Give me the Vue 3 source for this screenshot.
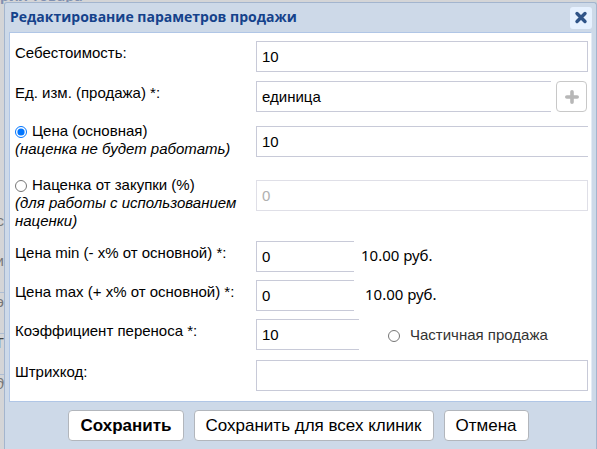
<script setup>
import { ref } from 'vue'

const cost = ref('10')
const unit = ref('единица')
const mode = ref('price')
const price = ref('10')
const markup = ref('0')
const minPct = ref('0')
const maxPct = ref('0')
const ratio = ref('10')
const partial = ref(false)
const barcode = ref('')
</script>

<template>
  <div class="page">
    <div class="backdrop" aria-hidden="true">
      <div class="backdrop-title">рил товара</div>
      <div class="backdrop-list">
        <span>с</span>
        <span>и</span>
        <span class="cell">э</span>
        <span class="cell dark">Т</span>
        <span class="cell slanted">д</span>
      </div>
    </div>

    <form class="dialog" role="dialog" aria-labelledby="dialog-title" @submit.prevent>
      <header class="head">
        <h1 id="dialog-title">Редактирование параметров продажи</h1>
        <button type="button" class="close" aria-label="Закрыть">
          <svg viewBox="0 0 22 22" width="22" height="22">
            <path d="M7 6.5L15 14.5M15 6.5L7 14.5" stroke="#2f5488" stroke-width="3.4" stroke-linecap="round" />
          </svg>
        </button>
      </header>

      <div class="body">
        <div class="group basics">
          <div class="row">
            <label for="cost">Себестоимость:</label>
            <input id="cost" v-model="cost" class="box" type="text" />
          </div>
          <div class="row">
            <label for="unit">Ед. изм. (продажа) *:</label>
            <div class="with-button">
              <input id="unit" v-model="unit" class="box open" type="text" />
              <button type="button" class="add" aria-label="Добавить единицу">
                <svg viewBox="0 0 14 14" width="14" height="14">
                  <path d="M7 1.8V12.2M1.8 7H12.2" stroke="#b7b7b7" stroke-width="3.6" stroke-linecap="round" />
                </svg>
              </button>
            </div>
          </div>
        </div>

        <div class="group modes">
          <div class="row choice">
            <label>
              <input v-model="mode" type="radio" name="mode" value="price" />Цена (основная)
              <em>(наценка не будет работать)</em>
            </label>
            <input v-model="price" class="box open" type="text" aria-label="Цена" />
          </div>
          <div class="row choice">
            <label>
              <input v-model="mode" type="radio" name="mode" value="markup" />Наценка от закупки (%)
              <em>(для работы с использованием наценки)</em>
            </label>
            <input v-model="markup" class="box" type="text" aria-label="Наценка" :disabled="mode !== 'markup'" />
          </div>
        </div>

        <div class="group limits">
          <div class="row">
            <label for="min">Цена min (- x% от основной) *:</label>
            <div class="short">
              <input id="min" v-model="minPct" class="box open" type="text" />
              <span class="sum">10.00 руб.</span>
            </div>
          </div>
          <div class="row">
            <label for="max">Цена max (+ x% от основной) *:</label>
            <div class="short wide">
              <input id="max" v-model="maxPct" class="box open" type="text" />
              <span class="sum">10.00 руб.</span>
            </div>
          </div>
          <div class="row">
            <label for="ratio">Коэффициент переноса *:</label>
            <div class="short ratio">
              <input id="ratio" v-model="ratio" class="box open" type="text" />
              <label class="partial">
                <input v-model="partial" type="radio" name="partial" :value="true" />Частичная продажа
              </label>
            </div>
          </div>
        </div>

        <div class="row">
          <label for="barcode">Штрихкод:</label>
          <input id="barcode" v-model="barcode" class="box" type="text" />
        </div>
      </div>

      <footer class="foot">
        <button type="submit" class="primary">Сохранить</button>
        <button type="button">Сохранить для всех клиник</button>
        <button type="button">Отмена</button>
      </footer>
    </form>
  </div>
</template>

<style>
body {
  background: #d4d5d7;
}
</style>

<style scoped>
.page {
  position: relative;
  overflow: hidden;
  padding: 2px 0 0 4px;
  font-family: "Liberation Sans", Arial, sans-serif;
  font-size: 15px;
  line-height: 18px;
  color: #000;
}

.backdrop {
  position: absolute;
  inset: 0;
  overflow: hidden;
  color: #777;
}

.backdrop-title {
  height: 18px;
  margin-top: -13px;
  font: bold 14px/18px "Open Sans", sans-serif;
  color: #8090b0;
}

.backdrop-list {
  display: grid;
  gap: 22px;
  width: 4px;
  padding-top: 207px;
  direction: rtl;
}

.cell {
  border-top: 1px solid #aebdd2;
}

.dark {
  color: #444;
}

.slanted {
  font-style: italic;
}

.dialog {
  position: relative;
  padding: 0 4px;
  border: 1px solid #a3b5ce;
  border-bottom: 0;
  border-radius: 3px 3px 0 0;
  background: #cdd9e8;
}

.head {
  display: flex;
  align-items: center;
  justify-content: space-between;
  height: 29px;
}

h1 {
  margin: 0;
  padding: 0 0 2px 1px;
  font: bold 14px/20px "Open Sans", Tahoma, sans-serif;
  color: #15428b;
}

button {
  font-family: inherit;
  color: #000;
  background: #fff;
  cursor: pointer;
}

.close {
  display: flex;
  padding: 0;
  border: 0;
  border-radius: 3px;
  background: #e6f1ff;
}

.body {
  display: flex;
  flex-direction: column;
  gap: 10px;
  padding: 8px 3px 10px 5px;
  border: 1px solid #b0c6e6;
  border-right-color: #e3ebf5;
  background: #fff;
}

.group {
  display: grid;
}

.basics {
  gap: 9px;
}

.modes {
  gap: 18px;
  padding-bottom: 1px;
}

.limits {
  gap: 8px;
}

.row {
  display: grid;
  grid-template-columns: 232px minmax(0, 1fr);
  column-gap: 9px;
  align-items: start;
}

.row > label {
  padding-top: 3px;
  white-space: nowrap;
}

.choice > label {
  padding-top: 0;
  white-space: normal;
}

.choice > .box {
  margin-top: 4px;
}

em {
  display: block;
}

input[type="radio"] {
  width: 12px;
  height: 12px;
  margin: 0 5px 0 0;
  vertical-align: -2px;
  accent-color: #0075ff;
}

.box {
  box-sizing: border-box;
  width: 100%;
  min-width: 0;
  height: 31px;
  padding: 0 5px;
  border: 1px solid #c8cad8;
  border-radius: 0;
  font: inherit;
  color: #000;
  background: #fff;
}

.box.open {
  border-right: 0;
}

.box:disabled {
  border-color: #dfdfe7;
  color: #b0b0b0;
}

.with-button {
  display: flex;
  gap: 5px;
  padding-right: 1px;
}

.add {
  display: flex;
  flex: none;
  align-items: center;
  justify-content: center;
  width: 31px;
  height: 31px;
  padding: 0;
  border: 1px solid #c8c8c8;
  border-radius: 4px;
}

.short {
  display: flex;
  align-items: center;
  gap: 7px;
}

.short .box {
  flex: none;
  width: 98px;
}

.wide {
  gap: 11px;
}

.ratio {
  gap: 29px;
}

.ratio .box {
  width: 103px;
}

.sum {
  padding-bottom: 4px;
  font-family: "Noto Sans", Tahoma, sans-serif;
}

.partial {
  color: #333;
}

.partial input {
  margin-right: 10px;
}

.foot {
  display: flex;
  justify-content: center;
  gap: 10px;
  padding: 8px 4px 15px 0;
}

.foot button {
  height: 31px;
  padding: 0 11px;
  border: 1px solid #b2b6bc;
  border-radius: 4px;
  font-size: 17px;
}

.foot .primary {
  font-weight: bold;
}
</style>
